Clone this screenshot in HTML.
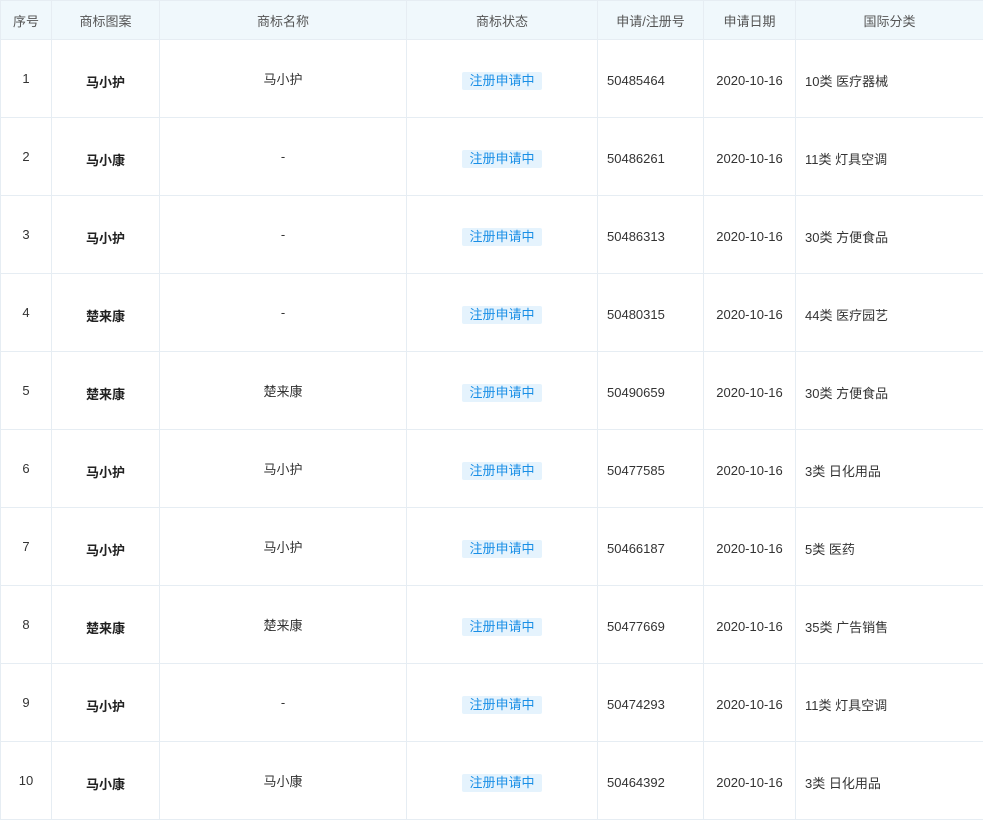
<!DOCTYPE html>
<html><head><meta charset="utf-8"><style>
body{margin:0;background:#fff;font-family:"Liberation Sans","Noto Sans CJK SC",sans-serif;font-size:13px;color:#333;}
table{border-collapse:collapse;table-layout:fixed;width:983px;position:absolute;left:0;top:0;}
td,th{border:1px solid #e6edf3;padding:0;text-align:center;}
th{height:38px;background:#f0f8fc;font-weight:normal;color:#555;}
td{height:77px;}
td.b{font-weight:bold;padding-top:6px;height:71px;color:#222;}
td.l{text-align:left;padding-left:9px;}
td.s,td.d,td.n{padding-top:4px;height:73px;}
.bd{display:inline-block;background:#e5f3fd;color:#1a8fe6;padding:0 7px;height:18px;line-height:18px;border-radius:2px;}
td.n{text-align:left;padding-left:9px}
</style></head><body>
<table>
<colgroup><col style="width:51px"><col style="width:108px"><col style="width:247px"><col style="width:191px"><col style="width:106px"><col style="width:92px"><col style="width:188px"></colgroup>
<tr><th>序号</th><th>商标图案</th><th>商标名称</th><th>商标状态</th><th>申请/注册号</th><th>申请日期</th><th>国际分类</th></tr>
<tr><td>1</td><td class="b">马小护</td><td>马小护</td><td class="s"><span class="bd">注册申请中</span></td><td class="n">50485464</td><td class="d">2020-10-16</td><td class="n">10类 医疗器械</td></tr>
<tr><td>2</td><td class="b">马小康</td><td>-</td><td class="s"><span class="bd">注册申请中</span></td><td class="n">50486261</td><td class="d">2020-10-16</td><td class="n">11类 灯具空调</td></tr>
<tr><td>3</td><td class="b">马小护</td><td>-</td><td class="s"><span class="bd">注册申请中</span></td><td class="n">50486313</td><td class="d">2020-10-16</td><td class="n">30类 方便食品</td></tr>
<tr><td>4</td><td class="b">楚来康</td><td>-</td><td class="s"><span class="bd">注册申请中</span></td><td class="n">50480315</td><td class="d">2020-10-16</td><td class="n">44类 医疗园艺</td></tr>
<tr><td>5</td><td class="b">楚来康</td><td>楚来康</td><td class="s"><span class="bd">注册申请中</span></td><td class="n">50490659</td><td class="d">2020-10-16</td><td class="n">30类 方便食品</td></tr>
<tr><td>6</td><td class="b">马小护</td><td>马小护</td><td class="s"><span class="bd">注册申请中</span></td><td class="n">50477585</td><td class="d">2020-10-16</td><td class="n">3类 日化用品</td></tr>
<tr><td>7</td><td class="b">马小护</td><td>马小护</td><td class="s"><span class="bd">注册申请中</span></td><td class="n">50466187</td><td class="d">2020-10-16</td><td class="n">5类 医药</td></tr>
<tr><td>8</td><td class="b">楚来康</td><td>楚来康</td><td class="s"><span class="bd">注册申请中</span></td><td class="n">50477669</td><td class="d">2020-10-16</td><td class="n">35类 广告销售</td></tr>
<tr><td>9</td><td class="b">马小护</td><td>-</td><td class="s"><span class="bd">注册申请中</span></td><td class="n">50474293</td><td class="d">2020-10-16</td><td class="n">11类 灯具空调</td></tr>
<tr><td>10</td><td class="b">马小康</td><td>马小康</td><td class="s"><span class="bd">注册申请中</span></td><td class="n">50464392</td><td class="d">2020-10-16</td><td class="n">3类 日化用品</td></tr>
</table>
</body></html>
